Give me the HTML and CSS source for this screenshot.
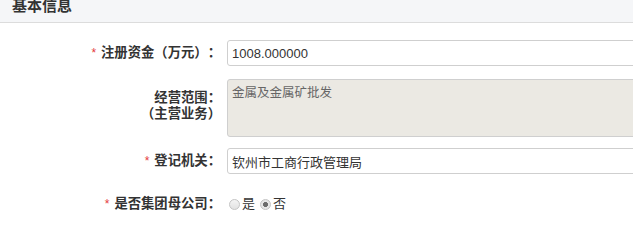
FILE: index.html
```html
<!DOCTYPE html>
<html lang="zh-CN">
<head>
<meta charset="utf-8">
<link rel="stylesheet" href="styles.css">
</head>
<body>
<div class="panel">
  <div class="panel-head"><span class="panel-title">基本信息</span></div>
  <div class="form">
    <div class="row row-1">
      <label class="label"><span class="req">*</span>注册资金（万元）：</label>
      <input class="field" type="text" value="1008.000000">
    </div>
    <div class="row row-2">
      <label class="label label-multi">经营范围：<br>（主营业务）</label>
      <textarea class="field area" readonly>金属及金属矿批发</textarea>
    </div>
    <div class="row row-3">
      <label class="label"><span class="req">*</span>登记机关：</label>
      <input class="field" type="text" value="钦州市工商行政管理局">
    </div>
    <div class="row row-4">
      <label class="label"><span class="req">*</span>是否集团母公司：</label>
      <div class="radios">
        <label class="opt"><input class="radio" type="radio" name="group">是</label>
        <label class="opt"><input class="radio" type="radio" name="group" checked>否</label>
      </div>
    </div>
  </div>
</div>
</body>
</html>
```
FILE: styles.css
```css
html, body {
  margin: 0;
  padding: 0;
  background: #fff;
  overflow: hidden;
}
body {
  font-family: "Liberation Sans", "Noto Sans CJK SC", sans-serif;
  color: #333;
  text-spacing-trim: space-all;
}
.panel-head {
  height: 22px;
  background: #f5f6f8;
  border-bottom: 1px solid #dcdcdc;
  padding-left: 12px;
  overflow: hidden;
}
.panel-title {
  display: block;
  font-size: 15px;
  line-height: 11px;
  font-weight: bold;
  color: #333;
}
.form {
  display: flex;
  flex-direction: column;
  padding-top: 17px;
}
.row {
  display: grid;
  grid-template-columns: 221px 440px;
  column-gap: 6px;
  align-items: center;
}
.row-2 { margin-top: 13px; }
.row-3 { margin-top: 11px; }
.row-4 { margin-top: 21px; }
.label {
  text-align: right;
  font-size: 13.33px;
  font-weight: bold;
  color: #333;
  line-height: 16px;
  white-space: nowrap;
  text-spacing-trim: space-all;
}
.label-multi {
  line-height: 16px;
  margin-top: -4px;
}
.req {
  color: #e4393c;
  font-weight: normal;
  font-size: 12px;
  margin-right: 5px;
}
.field {
  box-sizing: border-box;
  height: 26px;
  border: 1px solid #cfcfcf;
  border-radius: 3px;
  padding: 0 4px;
  font-family: "Liberation Sans", "Noto Sans CJK SC", sans-serif;
  font-size: 13px;
  color: #333;
  background: #fff;
  outline: none;
  margin: 0;
}
.area {
  height: 58px;
  resize: none;
  background: #ebe9e3;
  color: #666;
  padding: 5px 4px;
  line-height: 16px;
  font-size: 12.5px;
  overflow: hidden;
  display: block;
}
.radios {
  display: flex;
  align-items: center;
  gap: 5px;
  font-size: 13px;
  line-height: 18px;
  color: #333;
  padding-left: 2px;
}
.opt {
  display: flex;
  align-items: center;
  gap: 2px;
}
.radio {
  appearance: none;
  -webkit-appearance: none;
  width: 11px;
  height: 11px;
  margin: 0;
  border: 1px solid #c4c4c4;
  border-radius: 50%;
  background: linear-gradient(#f4f4f4, #e2e2e2);
  box-sizing: border-box;
}
.radio:checked {
  background: radial-gradient(circle, #6c6c6c 0, #6c6c6c 2.2px, #e6e6e6 2.8px);
}
```
